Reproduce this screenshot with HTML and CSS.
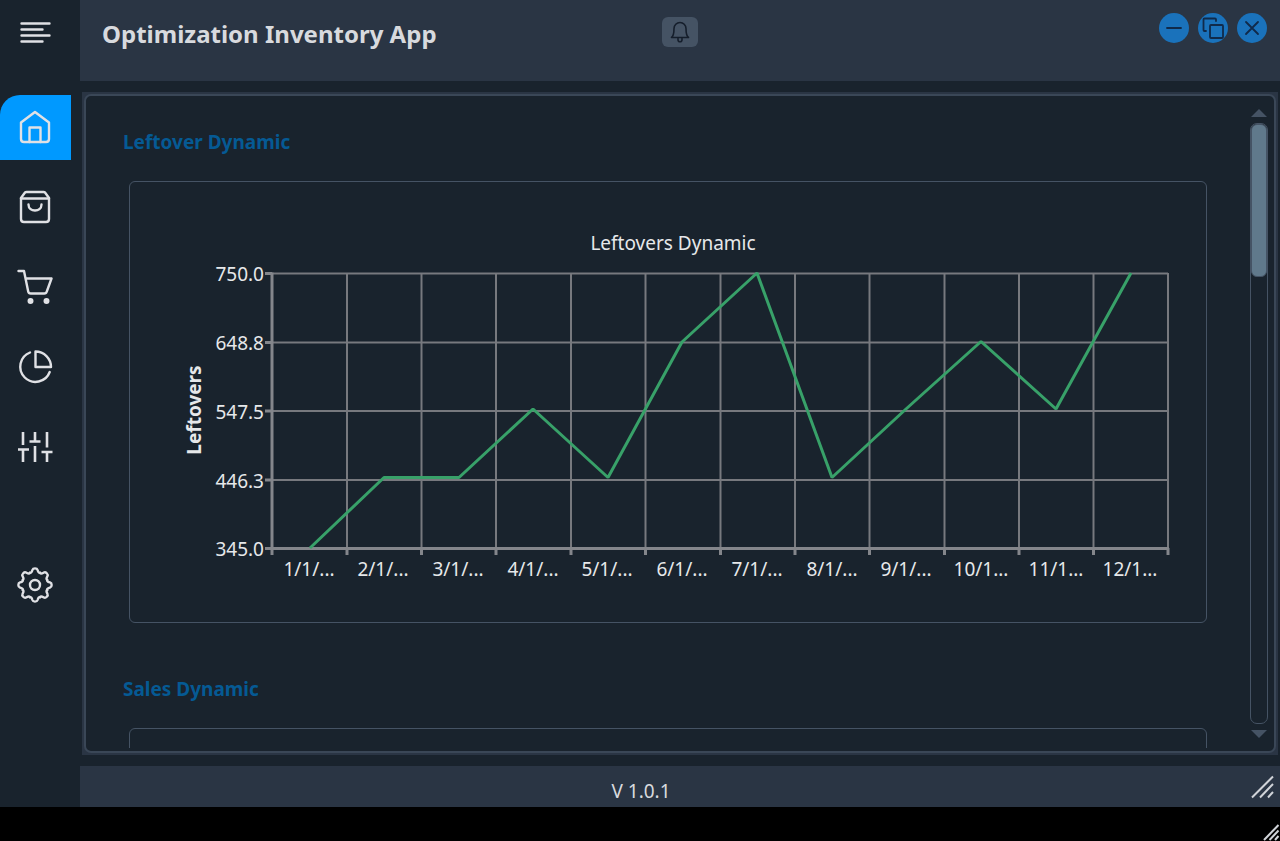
FILE: index.html
```html
<!DOCTYPE html>
<html lang="en">
<head>
<meta charset="utf-8">
<meta name="viewport" content="width=device-width, initial-scale=1">
<title>Optimization Inventory App</title>
<link rel="stylesheet" href="styles.css">
</head>
<body>
<div class="app">
  <nav class="sidebar" aria-label="Main">
    <button class="nav-btn menu" type="button" aria-label="Menu">
      <svg class="icon" width="36" height="36" viewBox="0 0 36 36"><path d="M4.500 9.500h28M4.500 15.500h21M4.500 21.500h28M4.500 27.500h21"/></svg>
    </button>
    <button class="nav-btn active" type="button" aria-label="Home">
      <svg class="icon" width="36" height="36" viewBox="0 0 36 36"><path d="M4 13.500 18 3l14 10.500V30q0 3-3 3H7q-3 0-3-3Z"/><path d="M12.500 33V18.500h11V33"/></svg>
    </button>
    <button class="nav-btn" type="button" aria-label="Products">
      <svg class="icon" width="36" height="36" viewBox="0 0 36 36"><path d="M4 9l4-5.500q.6-.5 1.500-.5h17q.9 0 1.500.5l4 5.500v21q0 3-3 3H7q-3 0-3-3Z"/><path d="M4 9.500h28M11.500 15.500c0 8 13 8 13 0"/></svg>
    </button>
    <button class="nav-btn" type="button" aria-label="Cart">
      <svg class="icon" width="36" height="36" viewBox="0 0 36 36"><path d="M1.500 2h5.500l4.200 20.500q.4 2 2.500 2h13.600q2 0 2.500-2L34.500 9.500H9"/><circle class="solid" cx="13.500" cy="32" r="1.800"/><circle class="solid" cx="29.500" cy="32" r="1.800"/></svg>
    </button>
    <button class="nav-btn" type="button" aria-label="Reports">
      <svg class="icon" width="36" height="36" viewBox="0 0 36 36"><path d="M13 3.500A15.200 15.200 0 1 0 32.700 23"/><path d="M18.500 2.500V18H34A15.500 15.500 0 0 0 18.500 2.500Z"/></svg>
    </button>
    <button class="nav-btn" type="button" aria-label="Filters">
      <svg class="icon butt" width="36" height="36" viewBox="0 0 36 36"><path d="M6 3v13M6 20v13M1 20.500h11M18 3v9.500M18 17v16M12.500 12.500h11M30 3v15.500M30 23v10M24.500 23h11"/></svg>
    </button>
    <button class="nav-btn settings" type="button" aria-label="Settings">
      <svg class="icon" width="36" height="36" viewBox="-18 -18 36 36">
        <defs><path id="tooth" d="M-5.050-12.200C-3.400-11.800-3-13.600-2.600-15-1.900-17.200 1.900-17.200 2.600-15 3-13.600 3.400-11.800 5.050-12.200"/></defs>
        <use href="#tooth"/><use href="#tooth" transform="rotate(45)"/><use href="#tooth" transform="rotate(90)"/><use href="#tooth" transform="rotate(135)"/><use href="#tooth" transform="rotate(180)"/><use href="#tooth" transform="rotate(225)"/><use href="#tooth" transform="rotate(270)"/><use href="#tooth" transform="rotate(315)"/>
        <circle r="5"/>
      </svg>
    </button>
  </nav>

  <div class="workspace">
    <header class="header">
      <h1 class="title">Optimization Inventory App</h1>
      <button class="bell" type="button" aria-label="Notifications">
        <svg class="icon dark" width="24" height="24" viewBox="0 0 24 24"><path d="M3.500 17.500c2-1.500 2.500-4 2.500-9a6 6 0 0 1 12 0c0 5 .5 7.500 2.500 9Z"/><path d="M10 18.500v1.200a2 2 0 0 0 4 0v-1.200"/></svg>
      </button>
      <div class="window-buttons">
        <button class="round" type="button" aria-label="Minimize"><svg class="icon navy" width="30" height="30" viewBox="0 0 30 30"><path d="M8 15h14"/></svg></button>
        <button class="round" type="button" aria-label="Restore"><svg class="icon navy" width="30" height="30" viewBox="0 0 30 30"><rect x="12" y="12" width="13" height="13" rx="1"/><path d="M8 18H6.500Q5.500 18 5.500 17V6.500q0-1 1-1H17q1 0 1 1V8"/></svg></button>
        <button class="round" type="button" aria-label="Close"><svg class="icon navy" width="30" height="30" viewBox="0 0 30 30"><path d="M9 9l12 12M21 9L9 21"/></svg></button>
      </div>
    </header>

    <main class="frame">
      <div class="panel">
        <div class="content">
          <section class="section">
            <h2 class="heading">Leftover Dynamic</h2>
            <div class="card">
              <svg class="chart" viewBox="0 0 1076 440" role="img" aria-label="Leftovers Dynamic line chart">
                <text class="label" x="543" y="68" text-anchor="middle">Leftovers Dynamic</text>
                <text class="label axis-title" transform="translate(71 228) rotate(-90)" text-anchor="middle">Leftovers</text>
                <g class="grid">
                  <path d="M142 91.500h896M142 160.500h896M142 229h896M142 298h896"/>
                  <path d="M217 91v275M291.500 91v275M366 91v275M441 91v275M515.500 91v275M590.500 91v275M665 91v275M739.500 91v275M814.500 91v275M889 91v275M963.500 91v275M1038 91v275"/>
                </g>
                <path class="axis" d="M142 90.500V373M135 366.500h904M135 91.500h7M135 160.500h7M135 229h7M135 298h7M217 366v7M291.500 366v7M366 366v7M441 366v7M515.500 366v7M590.500 366v7M665 366v7M739.500 366v7M814.500 366v7M889 366v7M963.500 366v7M1038 366v7"/>
                <path class="series" d="M180 366l74-70.500h75L403 227l75 68.500L552 160l75-69 75 204.500L776 227l75-67.500L926 227l75-136"/>
                <g class="label" text-anchor="end">
                  <text x="134" y="99">750.0</text><text x="134" y="168">648.8</text><text x="134" y="237">547.5</text><text x="134" y="306">446.3</text><text x="134" y="374">345.0</text>
                </g>
                <g class="label" text-anchor="middle">
                  <text x="179" y="394">1/1/...</text><text x="253" y="394">2/1/...</text><text x="328" y="394">3/1/...</text><text x="403" y="394">4/1/...</text><text x="477" y="394">5/1/...</text><text x="552" y="394">6/1/...</text><text x="627" y="394">7/1/...</text><text x="702" y="394">8/1/...</text><text x="776" y="394">9/1/...</text><text x="851" y="394">10/1...</text><text x="926" y="394">11/1...</text><text x="1000" y="394">12/1...</text>
                </g>
              </svg>
            </div>
          </section>
          <section class="section">
            <h2 class="heading">Sales Dynamic</h2>
            <div class="card empty"></div>
          </section>
        </div>
        <div class="scrollbar">
          <button class="arrow" type="button" aria-label="Scroll up"><svg width="16" height="8" viewBox="0 0 16 8"><path d="M0 8l8-8 8 8Z"/></svg></button>
          <div class="track"><div class="thumb"></div></div>
          <button class="arrow" type="button" aria-label="Scroll down"><svg width="16" height="8" viewBox="0 0 16 8"><path d="M0 0l8 8 8-8Z"/></svg></button>
        </div>
      </div>
    </main>

    <footer class="footer">
      <span class="version">V 1.0.1</span>
      <svg class="grip" width="24" height="24" viewBox="0 0 24 24"><path d="M1 22.500 22 1.500M9 22.500 22 9M17 22.500l5-5.500"/></svg>
    </footer>
  </div>
</div>
<div class="desktop">
  <svg class="grip" width="17" height="17" viewBox="0 0 17 17"><path d="M1 16 15.500 1M6.500 16l9-9.500M12 16l3.500-4"/></svg>
</div>
</body>
</html>
```
FILE: styles.css
```css
* { box-sizing: border-box; }

body {
  margin: 0;
  height: 100vh;
  display: flex;
  flex-direction: column;
  background: #000;
  color: #d8dade;
  font-family: "Noto Sans", "Open Sans", sans-serif;
}

button {
  border: 0;
  padding: 0;
  background: none;
  display: flex;
  align-items: center;
  justify-content: center;
}

svg { display: block; }

.app {
  flex: 1;
  min-height: 0;
  display: flex;
  background: #19232d;
}

.sidebar {
  width: 80px;
  flex: none;
  display: flex;
  flex-direction: column;
  align-items: flex-start;
  gap: 15px;
}

.nav-btn { width: 71px; height: 65px; padding: 0 1px 1px 0; }
.menu { margin-bottom: 15px; }
.active { background: #0099ff; border-top-left-radius: 20px; }
.settings { margin-top: 58px; }

.icon {
  fill: none;
  stroke: #e0e1e5;
  stroke-width: 2.4;
  stroke-linecap: round;
  stroke-linejoin: round;
}
.icon .solid { fill: #e0e1e5; }
.butt { stroke-width: 2.6; stroke-linecap: butt; }
.dark { stroke: #151e2b; stroke-width: 1.6; }
.navy { stroke: #102a4a; stroke-width: 1.8; }

.workspace {
  flex: 1;
  min-width: 0;
  display: flex;
  flex-direction: column;
}

.header {
  height: 81px;
  flex: none;
  display: grid;
  grid-template-columns: 1fr auto 1fr;
  align-items: start;
  padding: 13px 13px 0 22px;
  background: #2a3544;
}

.title {
  margin: 4px 0 0;
  font-size: 24px;
  line-height: 34px;
  font-weight: 700;
  white-space: nowrap;
}

.bell {
  width: 36px;
  height: 30px;
  margin-top: 4px;
  margin-right: 9px;
  border-radius: 6px;
  background: #455364;
}

.window-buttons { display: flex; justify-content: flex-end; gap: 9px; }
.round { width: 30px; height: 30px; border-radius: 50%; background: #1a72bb; }

.frame {
  flex: 1;
  min-height: 0;
  display: flex;
  margin: 11px 2px;
  padding: 2px;
  background: #2a3544;
}

.panel {
  flex: 1;
  min-width: 0;
  display: flex;
  padding: 2px 6px 3px 0;
  border: 2px solid #3a4757;
  border-radius: 7px;
  background: #19232d;
}

.content {
  flex: 1;
  min-width: 0;
  overflow: hidden;
  padding: 28px 43px 0 37px;
}

.section { margin-bottom: 50px; }

.heading {
  margin: 0 0 23px;
  font-size: 19px;
  line-height: 32px;
  font-weight: 700;
  color: #055a94;
}

.card {
  margin-left: 6px;
  border: 1px solid #455364;
  border-radius: 6px;
}
.empty { height: 442px; }

.chart { width: 100%; height: auto; }
.label { font-size: 19px; fill: #e6e8ea; }
.axis-title { font-weight: 700; }
.grid { fill: none; stroke: #77797e; stroke-width: 2; }
.axis { fill: none; stroke: #84868b; stroke-width: 3; }
.series { fill: none; stroke: #38a169; stroke-width: 3; stroke-linejoin: bevel; }

.scrollbar {
  width: 18px;
  flex: none;
  display: flex;
  flex-direction: column;
  align-items: center;
  gap: 6px;
  padding: 11px 0 10px;
}

.arrow svg { fill: #455364; }

.track {
  flex: 1;
  width: 18px;
  border: 1px solid #455364;
  border-radius: 7px;
}

.thumb {
  height: 25.5%;
  border: 1px solid #455364;
  border-radius: 6px;
  background: #60798b;
}

.footer {
  height: 41px;
  flex: none;
  display: grid;
  grid-template-columns: 1fr auto;
  align-items: center;
  padding: 0 5px 0 0;
  background: #2a3544;
}

.version {
  padding: 8px 0 0 49px;
  margin-right: 98px;
  font-size: 19px;
  line-height: 28px;
  text-align: center;
}

.grip { fill: none; stroke: #d0d3d8; stroke-width: 2; }

.desktop {
  height: 34px;
  flex: none;
  display: flex;
  justify-content: flex-end;
  align-items: flex-end;
}
```
